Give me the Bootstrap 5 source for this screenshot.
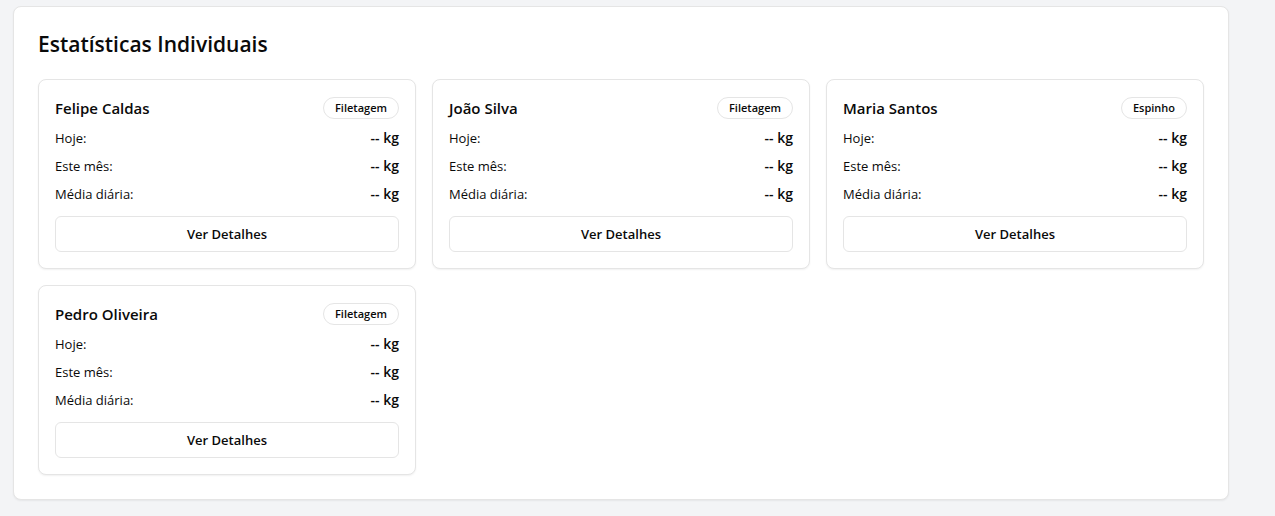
<!DOCTYPE html>
<html lang="pt-BR">
<head>
<meta charset="utf-8">
<meta name="viewport" content="width=device-width, initial-scale=1">
<title>Estatísticas Individuais</title>
<link rel="stylesheet" href="https://cdn.jsdelivr.net/npm/bootstrap@5.3.0/dist/css/bootstrap.min.css">
<style>
  body { background: #f3f4f6; color: #0a0a0a; font-family: "Open Sans", "Noto Sans", sans-serif; font-size: 13px; line-height: 20px; }
  .page { padding: 6px 46px 16px 13px; }
  .panel, .person { background: #fff; border: 1px solid #e5e5e5; border-radius: 8px; box-shadow: 0 1px 2px rgba(0, 0, 0, .06); }
  .panel { padding: 24px; }
  .panel-title { font-size: 21px; line-height: 26px; font-weight: 600; margin-bottom: 22px; }
  .person { padding: 16px; }
  .person-name { font-size: 15px; line-height: 24px; font-weight: 600; margin: 0; }
  .sector { border: 1px solid #e5e5e5; border-radius: 11px; padding: 2px 11px; font-size: 11px; line-height: 16px; font-weight: 600; }
  .stats { gap: 8px; margin: 8px 0 12px; }
  .stats dt { font-weight: 400; }
  .stats dd { font-size: 14px; font-weight: 600; margin: 0; }
  .details { border: 1px solid #e5e5e5; border-radius: 6px; background: #fff; color: #0a0a0a; font-size: 13px; line-height: 20px; font-weight: 600; padding: 7px 16px; }
</style>
</head>
<body>
<main class="page">
  <section class="panel">
    <h1 class="panel-title">Estatísticas Individuais</h1>
    <div class="row row-cols-1 row-cols-md-2 row-cols-lg-3 g-3" id="people"></div>
  </section>
</main>
<script src="https://cdn.jsdelivr.net/npm/bootstrap@5.3.0/dist/js/bootstrap.bundle.min.js"></script>
<script>
  const people = [["Felipe Caldas", "Filetagem"], ["João Silva", "Filetagem"], ["Maria Santos", "Espinho"], ["Pedro Oliveira", "Filetagem"]];
  const stats = ["Hoje:", "Este mês:", "Média diária:"];
  document.getElementById("people").innerHTML = people.map(([name, sector]) => `
    <div class="col"><article class="person">
      <div class="d-flex justify-content-between align-items-center">
        <h2 class="person-name">${name}</h2><span class="sector">${sector}</span>
      </div>
      <dl class="stats d-flex flex-column">
        ${stats.map(s => `<div class="d-flex justify-content-between"><dt>${s}</dt><dd>-- kg</dd></div>`).join("")}
      </dl>
      <button type="button" class="btn details w-100">Ver Detalhes</button>
    </article></div>`).join("");
</script>
</body>
</html>
